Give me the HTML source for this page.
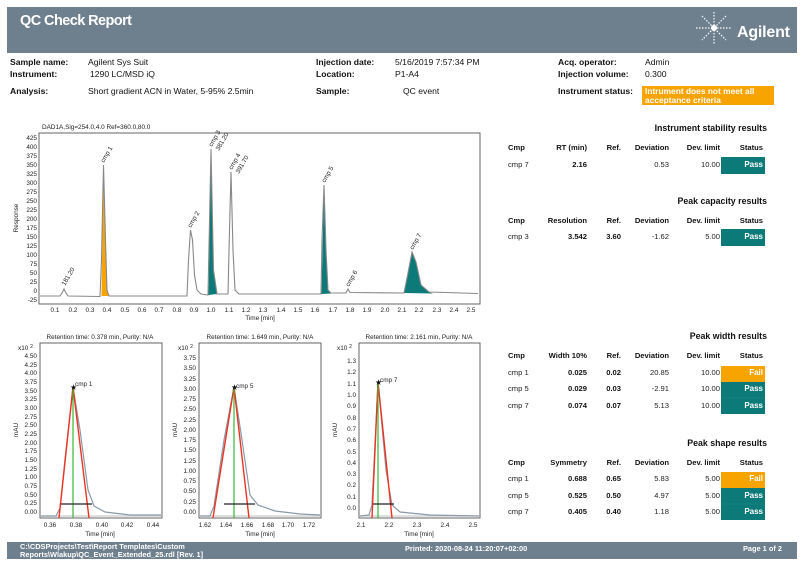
<!DOCTYPE html>
<html><head><meta charset="utf-8"><style>
html,body{margin:0;padding:0;background:#fff}
svg{display:block;font-family:"Liberation Sans",Arial,sans-serif}
.l{font-size:8.6px;font-weight:bold;fill:#111}
.v{font-size:8.6px;fill:#111}
.t{font-size:6.4px;fill:#222}
.th{font-size:7.6px;font-weight:bold;fill:#111}
.td{font-size:7.6px;fill:#222}
.tb{font-size:7.6px;font-weight:bold;fill:#111}
.tt{font-size:8.8px;font-weight:bold;fill:#111}
.st{font-size:8px;font-weight:bold;fill:#fff}
</style></head><body>
<svg width="800" height="566" viewBox="0 0 800 566">
<rect x="7" y="7" width="790" height="46" fill="#6e7f8e"/>
<text x="20" y="25" fill="#fff" font-size="14.5" font-weight="bold" textLength="112">QC Check Report</text>
<g stroke="#fff" stroke-width="1.2" stroke-dasharray="1.5 1.5">
<line x1="714" y1="12" x2="714" y2="45"/><line x1="696" y1="28" x2="732" y2="28"/>
<line x1="702" y1="16" x2="726" y2="40"/><line x1="726" y1="16" x2="702" y2="40"/>
</g>
<circle cx="714" cy="28" r="3" fill="#fff"/>
<text x="737" y="37" fill="#fff" font-size="16" font-weight="bold" textLength="53">Agilent</text>
<text class="l" x="10" y="65">Sample name:</text><text class="v" x="88" y="65">Agilent Sys Suit</text>
<text class="l" x="10" y="77">Instrument:</text><text class="v" x="90" y="77">1290 LC/MSD iQ</text>
<text class="l" x="10" y="94">Analysis:</text><text class="v" x="88" y="94">Short gradient ACN in Water, 5-95% 2.5min</text>
<text class="l" x="316" y="65">Injection date:</text><text class="v" x="395" y="65">5/16/2019 7:57:34 PM</text>
<text class="l" x="316" y="77">Location:</text><text class="v" x="395" y="77">P1-A4</text>
<text class="l" x="316" y="94">Sample:</text><text class="v" x="403" y="94">QC event</text>
<text class="l" x="558" y="65">Acq. operator:</text><text class="v" x="645" y="65">Admin</text>
<text class="l" x="558" y="77">Injection volume:</text><text class="v" x="645" y="77">0.300</text>
<text class="l" x="558" y="94">Instrument status:</text>
<rect x="642" y="86" width="132" height="19" fill="#f7a300"/>
<text x="645" y="94" fill="#fff" font-size="8.4" font-weight="bold">Intrument does not meet all</text>
<text x="645" y="103" fill="#fff" font-size="8.4" font-weight="bold">acceptance criteria</text>

<text class="t" x="42" y="129">DAD1A,Sig=254.0,4.0  Ref=360.0,80.0</text>
<rect x="39" y="133" width="441" height="171" fill="none" stroke="#555" stroke-width="0.9"/>
<g class="t" text-anchor="end">
<text x="37" y="140">425</text><text x="37" y="149">400</text><text x="37" y="158">375</text><text x="37" y="167">350</text><text x="37" y="176">325</text><text x="37" y="185">300</text><text x="37" y="194">275</text><text x="37" y="203">250</text><text x="37" y="212">225</text><text x="37" y="221">200</text><text x="37" y="230">175</text><text x="37" y="239">150</text><text x="37" y="248">125</text><text x="37" y="257">100</text><text x="37" y="266">75</text><text x="37" y="275">50</text><text x="37" y="284">25</text><text x="37" y="293">0</text><text x="37" y="302">-25</text>
</g>
<g class="t" text-anchor="middle">
<text x="55" y="312">0.1</text><text x="73" y="312">0.2</text><text x="90" y="312">0.3</text><text x="107" y="312">0.4</text><text x="125" y="312">0.5</text><text x="142" y="312">0.6</text><text x="159" y="312">0.7</text><text x="177" y="312">0.8</text><text x="194" y="312">0.9</text><text x="211" y="312">1.0</text><text x="229" y="312">1.1</text><text x="246" y="312">1.2</text><text x="263" y="312">1.3</text><text x="281" y="312">1.4</text><text x="298" y="312">1.5</text><text x="315" y="312">1.6</text><text x="333" y="312">1.7</text><text x="350" y="312">1.8</text><text x="367" y="312">1.9</text><text x="385" y="312">2.0</text><text x="402" y="312">2.1</text><text x="419" y="312">2.2</text><text x="437" y="312">2.3</text><text x="454" y="312">2.4</text><text x="471" y="312">2.5</text>
<text x="260" y="320">Time [min]</text>
</g>
<text class="t" x="18" y="218" text-anchor="middle" transform="rotate(-90 18 218)">Response</text>
<path d="M101.5 296 L103.5 165 L105.5 240 L107 290 L109 296Z" fill="#f7a300"/>
<path d="M208.5 295 L211 149 L213.5 270 L217 294 Z" fill="#0b7a78"/>
<path d="M321.5 294 L324 185 L326 250 L328 290 L331 293.5 Z" fill="#0b7a78"/>
<path d="M404 293 L408 273 L412 252 L416 262 L421 285 L429 292 L433 293.5 Z" fill="#0b7a78"/>
<path d="M40 296 L60 296 L62 293 L64 289 L66 293 L68 296 L100 296.5 L101.5 260 L103.5 165 L105.5 240 L107 290 L109 296 L187 296 L188.5 260 L190.5 230 L192.5 240 L194.5 275 L197 290 L201 294 L208 295 L208.5 270 L211 149 L213.5 270 L217 294 L228 294 L229 250 L231 172 L233 250 L235 290 L239 294 L321 294 L322 240 L324 185 L326 250 L328 290 L331 293 L346 293 L348 289 L350 292.5 L404 293 L408 273 L412 252 L416 262 L421 285 L429 292 L478 293.5" fill="none" stroke="#888" stroke-width="1.1"/>
<g class="t" font-size="7">
<text transform="translate(65,286) rotate(-60)">181.20</text>
<text transform="translate(104,163) rotate(-60)">cmp 1</text>
<text transform="translate(191,228) rotate(-60)">cmp 2</text>
<text transform="translate(212,147) rotate(-60)">cmp 3</text>
<text transform="translate(219,151) rotate(-60)">381.20</text>
<text transform="translate(232,170) rotate(-60)">cmp 4</text>
<text transform="translate(239,174) rotate(-60)">391.70</text>
<text transform="translate(325,183) rotate(-60)">cmp 5</text>
<text transform="translate(349,287) rotate(-60)">cmp 6</text>
<text transform="translate(413,250) rotate(-60)">cmp 7</text>
</g>

<g class="t" text-anchor="middle">
<text x="100" y="339">Retention time: 0.378 min, Purity: N/A</text>
<text x="260" y="339">Retention time: 1.649 min, Purity: N/A</text>
<text x="419" y="339">Retention time: 2.161 min, Purity: N/A</text>
</g>
<rect x="40" y="343" width="122" height="175" fill="none" stroke="#555" stroke-width="0.9"/>
<rect x="199" y="343" width="122" height="175" fill="none" stroke="#555" stroke-width="0.9"/>
<rect x="359" y="343" width="121" height="175" fill="none" stroke="#555" stroke-width="0.9"/>
<g class="t">
<text x="18" y="350">x10 <tspan font-size="5" dy="-2">2</tspan></text>
<text x="178" y="350">x10 <tspan font-size="5" dy="-2">2</tspan></text>
<text x="337" y="350">x10 <tspan font-size="5" dy="-2">2</tspan></text>
<text x="18" y="430" text-anchor="middle" transform="rotate(-90 18 430)">mAU</text>
<text x="177" y="430" text-anchor="middle" transform="rotate(-90 177 430)">mAU</text>
<text x="337" y="430" text-anchor="middle" transform="rotate(-90 337 430)">mAU</text>
</g>
<g class="t" text-anchor="end">
<text x="37" y="358">4.50</text><text x="37" y="367">4.25</text><text x="37" y="375">4.00</text><text x="37" y="384">3.75</text><text x="37" y="393">3.50</text><text x="37" y="401">3.25</text><text x="37" y="410">3.00</text><text x="37" y="419">2.75</text><text x="37" y="427">2.50</text><text x="37" y="436">2.25</text><text x="37" y="445">2.00</text><text x="37" y="453">1.75</text><text x="37" y="462">1.50</text><text x="37" y="471">1.25</text><text x="37" y="479">1.00</text><text x="37" y="488">0.75</text><text x="37" y="497">0.50</text><text x="37" y="505">0.25</text><text x="37" y="514">0.00</text>
<text x="196" y="360">3.75</text><text x="196" y="370">3.50</text><text x="196" y="381">3.25</text><text x="196" y="391">3.00</text><text x="196" y="401">2.75</text><text x="196" y="411">2.50</text><text x="196" y="422">2.25</text><text x="196" y="432">2.00</text><text x="196" y="442">1.75</text><text x="196" y="452">1.50</text><text x="196" y="463">1.25</text><text x="196" y="473">1.00</text><text x="196" y="483">0.75</text><text x="196" y="493">0.50</text><text x="196" y="504">0.25</text><text x="196" y="514">0.00</text>
<text x="356" y="363">1.3</text><text x="356" y="374">1.2</text><text x="356" y="386">1.1</text><text x="356" y="397">1.0</text><text x="356" y="408">0.9</text><text x="356" y="420">0.8</text><text x="356" y="431">0.7</text><text x="356" y="442">0.6</text><text x="356" y="454">0.5</text><text x="356" y="465">0.4</text><text x="356" y="476">0.3</text><text x="356" y="487">0.2</text><text x="356" y="499">0.1</text><text x="356" y="510">0.0</text>
</g>
<g class="t" text-anchor="middle">
<text x="50" y="527">0.36</text><text x="76" y="527">0.38</text><text x="102" y="527">0.40</text><text x="127" y="527">0.42</text><text x="153" y="527">0.44</text>
<text x="205" y="527">1.62</text><text x="226" y="527">1.64</text><text x="247" y="527">1.66</text><text x="268" y="527">1.68</text><text x="288" y="527">1.70</text><text x="309" y="527">1.72</text>
<text x="361" y="527">2.1</text><text x="389" y="527">2.2</text><text x="417" y="527">2.3</text><text x="445" y="527">2.4</text><text x="473" y="527">2.5</text>
<text x="100" y="536">Time [min]</text><text x="260" y="536">Time [min]</text><text x="419" y="536">Time [min]</text>
</g>
<g fill="none" stroke-width="1.2">
<line x1="41" y1="516" x2="161" y2="516" stroke="#ccc"/>
<line x1="200" y1="516" x2="320" y2="516" stroke="#ccc"/>
<line x1="360" y1="516" x2="479" y2="516" stroke="#ccc"/>
<path d="M41 516 L56 516 L60 508 L66 450 L73 387 L80 430 L88 490 L94 506 L105 512 L130 515 L161 515" stroke="#8a9aa8"/>
<path d="M59 518 L73 387 L89 518" stroke="#e32" stroke-width="1.4"/>
<line x1="73" y1="387" x2="73" y2="518" stroke="#3b3"/>
<line x1="61" y1="504" x2="92" y2="504" stroke="#222"/>
<path d="M200 516 L210 516 L214 506 L224 440 L234 387 L242 440 L250 495 L258 505 L275 511 L300 514 L320 515" stroke="#8a9aa8"/>
<path d="M213 518 L234 387 L249 518" stroke="#e32" stroke-width="1.4"/>
<line x1="234" y1="387" x2="234" y2="518" stroke="#3b3"/>
<line x1="224" y1="504" x2="255" y2="504" stroke="#222"/>
<path d="M360 516 L369 515 L372 505 L378 382 L386 470 L392 505 L400 512 L430 515 L479 516" stroke="#8a9aa8"/>
<path d="M372 518 L378 382 L392 518" stroke="#e32" stroke-width="1.4"/>
<line x1="378" y1="382" x2="378" y2="518" stroke="#3b3"/>
<line x1="373" y1="504" x2="394" y2="504" stroke="#222"/>
</g>
<g font-size="8" fill="#111"><text x="70" y="390">★</text><text x="231" y="390">★</text><text x="375" y="385">★</text></g>
<g class="t" font-size="7"><text x="75" y="386">cmp 1</text><text x="236" y="388">cmp 5</text><text x="380" y="382">cmp 7</text></g>

<g text-anchor="end">
<text class="tt" x="767" y="131">Instrument stability results</text>
<text class="tt" x="767" y="204">Peak capacity results</text>
<text class="tt" x="767" y="339">Peak width results</text>
<text class="tt" x="767" y="446">Peak shape results</text>
</g>
<g class="th"><text x="508" y="150">Cmp</text><text x="587" y="150" text-anchor="end">RT (min)</text><text x="621" y="150" text-anchor="end">Ref.</text><text x="669" y="150" text-anchor="end">Deviation</text><text x="720" y="150" text-anchor="end">Dev. limit</text><text x="763" y="150" text-anchor="end">Status</text></g>
<text class="td" x="508" y="167">cmp 7</text><text class="tb" x="587" y="167" text-anchor="end">2.16</text><text class="td" x="669" y="167" text-anchor="end">0.53</text><text class="td" x="720" y="167" text-anchor="end">10.00</text>
<rect x="721" y="157" width="44" height="17" fill="#0b7a78"/><text class="st" x="763" y="167" text-anchor="end">Pass</text>
<g class="th"><text x="508" y="223">Cmp</text><text x="587" y="223" text-anchor="end">Resolution</text><text x="621" y="223" text-anchor="end">Ref.</text><text x="669" y="223" text-anchor="end">Deviation</text><text x="720" y="223" text-anchor="end">Dev. limit</text><text x="763" y="223" text-anchor="end">Status</text></g>
<text class="td" x="508" y="239">cmp 3</text><text class="tb" x="587" y="239" text-anchor="end">3.542</text><text class="tb" x="621" y="239" text-anchor="end">3.60</text><text class="td" x="669" y="239" text-anchor="end">-1.62</text><text class="td" x="720" y="239" text-anchor="end">5.00</text>
<rect x="721" y="229" width="44" height="17" fill="#0b7a78"/><text class="st" x="763" y="239" text-anchor="end">Pass</text>
<g class="th"><text x="508" y="358">Cmp</text><text x="587" y="358" text-anchor="end">Width 10%</text><text x="621" y="358" text-anchor="end">Ref.</text><text x="669" y="358" text-anchor="end">Deviation</text><text x="720" y="358" text-anchor="end">Dev. limit</text><text x="763" y="358" text-anchor="end">Status</text></g>
<rect x="721" y="366" width="44" height="16" fill="#f7a300"/><rect x="721" y="382" width="44" height="32" fill="#0b7a78"/>
<line x1="721" y1="398" x2="765" y2="398" stroke="#2a8c8a" stroke-width="0.6"/>
<g class="td"><text x="508" y="375">cmp 1</text><text x="508" y="391">cmp 5</text><text x="508" y="408">cmp 7</text></g>
<g class="tb" text-anchor="end"><text x="587" y="375">0.025</text><text x="587" y="391">0.029</text><text x="587" y="408">0.074</text><text x="621" y="375">0.02</text><text x="621" y="391">0.03</text><text x="621" y="408">0.07</text></g>
<g class="td" text-anchor="end"><text x="669" y="375">20.85</text><text x="669" y="391">-2.91</text><text x="669" y="408">5.13</text><text x="720" y="375">10.00</text><text x="720" y="391">10.00</text><text x="720" y="408">10.00</text></g>
<g class="st" text-anchor="end"><text x="763" y="375">Fail</text><text x="763" y="391">Pass</text><text x="763" y="408">Pass</text></g>
<g class="th"><text x="508" y="465">Cmp</text><text x="587" y="465" text-anchor="end">Symmetry</text><text x="621" y="465" text-anchor="end">Ref.</text><text x="669" y="465" text-anchor="end">Deviation</text><text x="720" y="465" text-anchor="end">Dev. limit</text><text x="763" y="465" text-anchor="end">Status</text></g>
<rect x="721" y="472" width="44" height="16" fill="#f7a300"/><rect x="721" y="488" width="44" height="32" fill="#0b7a78"/>
<line x1="721" y1="504" x2="765" y2="504" stroke="#2a8c8a" stroke-width="0.6"/>
<g class="td"><text x="508" y="481">cmp 1</text><text x="508" y="498">cmp 5</text><text x="508" y="514">cmp 7</text></g>
<g class="tb" text-anchor="end"><text x="587" y="481">0.688</text><text x="587" y="498">0.525</text><text x="587" y="514">0.405</text><text x="621" y="481">0.65</text><text x="621" y="498">0.50</text><text x="621" y="514">0.40</text></g>
<g class="td" text-anchor="end"><text x="669" y="481">5.83</text><text x="669" y="498">4.97</text><text x="669" y="514">1.18</text><text x="720" y="481">5.00</text><text x="720" y="498">5.00</text><text x="720" y="514">5.00</text></g>
<g class="st" text-anchor="end"><text x="763" y="481">Fail</text><text x="763" y="498">Pass</text><text x="763" y="514">Pass</text></g>

<rect x="7" y="542" width="790" height="17" fill="#6e7f8e"/>
<g fill="#fff" font-size="7.4" font-weight="bold">
<text x="20" y="549">C:\CDSProjects\Test\Report Templates\Custom</text>
<text x="20" y="557">Reports\Wlakup\QC_Event_Extended_25.rdl [Rev. 1]</text>
<text x="405" y="551">Printed:  2020-08-24 11:20:07+02:00</text>
<text x="782" y="551" text-anchor="end">Page 1 of 2</text>
</g>
</svg>
</body></html>
